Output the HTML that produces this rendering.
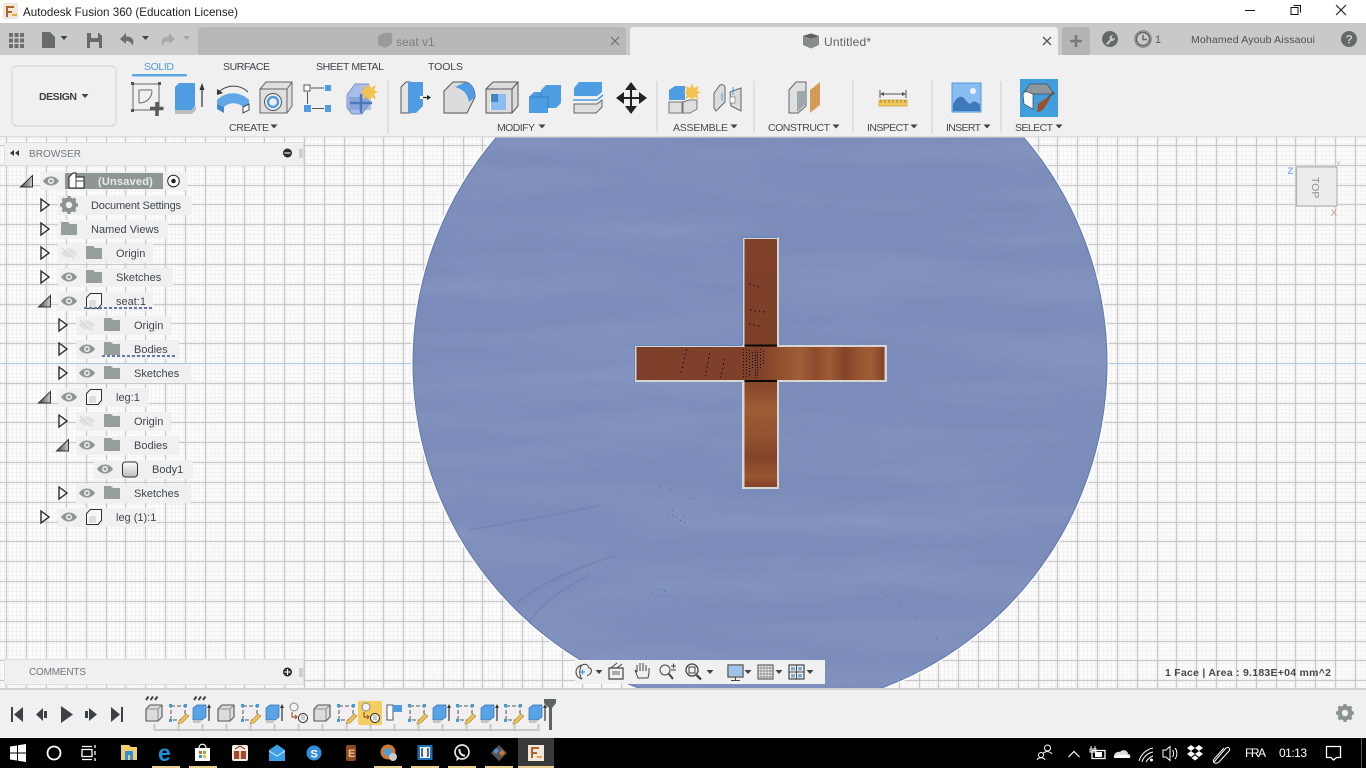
<!DOCTYPE html>
<html lang="en"><head><meta charset="utf-8"><title>Autodesk Fusion 360</title>
<style>
html,body{margin:0;padding:0;width:1366px;height:768px;overflow:hidden;background:#fff}
svg{display:block}
text{font-family:"Liberation Sans",sans-serif}
.t{font-size:11px;fill:#3f4650}
.l{font-size:10.5px;fill:#454b52}
.tab{font-size:10.5px;fill:#3c4248}
.w{fill:#fff;font-size:12px}
</style></head><body>
<svg xmlns="http://www.w3.org/2000/svg" width="1366" height="768" viewBox="0 0 1366 768">
<defs>
<pattern id="grid" patternUnits="userSpaceOnUse" x="0.5" y="0.5" width="3.966" height="3.966">
<rect width="3.966" height="3.966" fill="#fcfcfc"/>
<path d="M0 0V3.966M0 0H3.966" stroke="#ebebeb" stroke-width="1" fill="none"/>
</pattern>
<filter id="wood" x="0" y="0" width="100%" height="100%"><feTurbulence type="fractalNoise" baseFrequency="0.004 0.03" numOctaves="3" seed="5"/><feColorMatrix values="0 0 0 0 0.36  0 0 0 0 0.45  0 0 0 0 0.66  1.4 0 0 0 -0.5"/></filter>
<clipPath id="disc"><circle cx="760" cy="363" r="346.5"/></clipPath>
<clipPath id="can"><rect x="0" y="137" width="1366" height="551"/></clipPath>
<linearGradient id="brH" x1="0" x2="1" y1="0" y2="0">
<stop offset="0" stop-color="#7d3f29"/><stop offset=".5" stop-color="#7f412a"/><stop offset=".58" stop-color="#92502f"/><stop offset=".66" stop-color="#a15d36"/><stop offset=".72" stop-color="#8d4c2e"/><stop offset=".78" stop-color="#a05a35"/><stop offset=".84" stop-color="#82432a"/><stop offset=".9" stop-color="#9a5632"/><stop offset=".95" stop-color="#a05c36"/><stop offset="1" stop-color="#7f412a"/>
</linearGradient>
<linearGradient id="brV" x1="0" x2="0" y1="0" y2="1">
<stop offset="0" stop-color="#80412a"/><stop offset=".4" stop-color="#7e3f29"/><stop offset=".6" stop-color="#8a492c"/><stop offset=".68" stop-color="#a05c35"/><stop offset=".8" stop-color="#925130"/><stop offset=".88" stop-color="#83442b"/><stop offset=".96" stop-color="#99552f"/><stop offset="1" stop-color="#82432a"/>
</linearGradient>
<linearGradient id="triG" x1="0" x2="1" y1="0" y2="0"><stop offset="0" stop-color="#444"/><stop offset="1" stop-color="#ccc"/></linearGradient>
<linearGradient id="bodyG" x1="0" x2="0" y1="0" y2="1"><stop offset="0" stop-color="#fff"/><stop offset="1" stop-color="#bbb"/></linearGradient>

<g id="eye"><path d="M-8 0C-4 -6 4 -6 8 0C4 6 -4 6 -8 0Z" fill="#8f9793"/><circle r="3" fill="#f0f0f0"/><circle r="1.5" fill="#8f9793"/></g>
<g id="eyeoff"><path d="M-8 0C-4 -6 4 -6 8 0C4 6 -4 6 -8 0Z" fill="#dfe1e0"/><path d="M-6 -5L6 5" stroke="#f0f0f0" stroke-width="2"/><path d="M-7 -5L6 6" stroke="#d4d6d5" stroke-width="1"/></g>
<path id="folder" d="M0 0H7L9 2H16V13H0Z" fill="#969e9a"/>
<path id="tc" d="M0 -6L8 0L0 6Z" fill="#f5f5f5" stroke="#2c2c2c" stroke-width="1.400"/>
<path id="to" d="M-6.500 6H5.500V-5.500Z" fill="url(#triG)" stroke="#333" stroke-width="1"/>
<g id="comp"><path d="M-7.500 -3.500L-3.500 -7.500H7.500V3.500L4 7.500H-7.500Z" fill="#f7f7f7" stroke="#333" stroke-width="1" stroke-linejoin="round"/><rect x="-5" y="-1" width="7" height="7" fill="#dedede"/></g>
<g id="boxgray"><path d="M-8 -4L-4 -8H8V4L4 8H-8Z" fill="#dcdcdc" stroke="#555" stroke-width="1.100" stroke-linejoin="round"/><path d="M-8 -4H4V8M4 -4L8 -8" fill="none" stroke="#777" stroke-width=".8"/></g>
<g id="skpen"><path d="M-7 -7H7V7H-7Z" fill="none" stroke="#555" stroke-dasharray="4 2"/><rect x="-9" y="-9" width="3" height="3" fill="#3f9be5"/><rect x="6" y="-9" width="3" height="3" fill="#3f9be5"/><rect x="-9" y="6" width="3" height="3" fill="#3f9be5"/><path d="M1 8L8 1L11 3L4 10L0 11Z" fill="#eec25a" stroke="#a58437" stroke-width=".6"/></g>
<g id="boxblue"><path d="M-8 -5L-4 -8H5V4L1 7H-8Z" fill="#5aa3e6" stroke="#2f6ea8" stroke-width=".7"/><path d="M-8 7H1L-1 10H-8Z" fill="#c4c4c4"/><path d="M8 -6V8" stroke="#333" stroke-width="1.200"/><path d="M6 -5L8 -9L10 -5Z" fill="#333"/></g>
<g id="cap"><path d="M-3.500 -2H3.500L0 2Z" fill="#3f4448"/></g>
<g id="gear"><circle r="5.500" fill="none" stroke="#8b9490" stroke-width="4"/><path d="M0 -9V9M-9 0H9M-6.400 -6.400L6.400 6.400M6.400 -6.400L-6.400 6.400" stroke="#8b9490" stroke-width="3.200"/><circle r="3.200" fill="#f0f0f0"/></g>
<g id="linked"><circle cx="-4" cy="-6" r="4" fill="#f3f3f3" stroke="#888"/><path d="M-6 -1V4H-1M-3 2L-1 4L-3 6" fill="none" stroke="#a5562e" stroke-width="1.200"/><circle cx="5" cy="5" r="4.500" fill="#fff" stroke="#222"/><rect x="3" y="2" width="4" height="5" fill="#ccc"/></g>
</defs>

<!-- title bar -->
<rect width="1366" height="23" fill="#fff"/>
<rect x="3" y="3" width="15" height="16" fill="#f1e8dc"/><path d="M6 6H14V8H8V11H12V13H8V17H6Z" fill="#b2612c"/><rect x="12" y="14" width="5" height="2" fill="#eca341"/>
<text x="23" y="16" font-size="12" fill="#222" textLength="215" lengthAdjust="spacingAndGlyphs">Autodesk Fusion 360 (Education License)</text>
<path d="M1245 10.500H1255" stroke="#111" stroke-width="1"/>
<path d="M1293.500 5.500H1300.500V12.500M1291 7.500H1298V14.500H1291Z" fill="none" stroke="#111"/>
<path d="M1336 5L1346 15M1346 5L1336 15" stroke="#111" stroke-width="1"/>

<!-- tab bar -->
<rect y="23" width="1366" height="32" fill="#c9c9c9"/>
<g fill="#6b6f6f"><rect x="9" y="33" width="4" height="4"/><rect x="14.500" y="33" width="4" height="4"/><rect x="20" y="33" width="4" height="4"/><rect x="9" y="38.500" width="4" height="4"/><rect x="14.500" y="38.500" width="4" height="4"/><rect x="20" y="38.500" width="4" height="4"/><rect x="9" y="44" width="4" height="4"/><rect x="14.500" y="44" width="4" height="4"/><rect x="20" y="44" width="4" height="4"/></g>
<path d="M42 32H50L55 37V48H42Z" fill="#666b6b"/><use href="#cap" x="64" y="38"/>
<path d="M87 33H99L102 36V48H87ZM91 33V38H98V33ZM90 42V48H99V42Z" fill="#666b6b" fill-rule="evenodd"/>
<path d="M126 33L120 39L126 44V41C130 41 132 43 132 46C135 41 133 36.500 126 36.500Z" fill="#6b6f6f"/><use href="#cap" x="145.500" y="38"/>
<path d="M169 33L175 39L169 44V41C165 41 163 43 163 46C160 41 162 36.500 169 36.500Z" fill="#a6aaaa"/><path d="M183 36H190L186.500 40Z" fill="#a0a4a4"/>
<path d="M198 55V31Q198 27 202 27H622Q626 27 626 31V55Z" fill="#b8b8b8"/>
<path d="M378 36L384 33H392V44L385 48L378 45Z" fill="#989c98" stroke="#a9aca9" stroke-width=".5"/>
<text x="396" y="46" font-size="12" fill="#7a7d80">seat v1</text>
<path d="M611 37L619 45M619 37L611 45" stroke="#707070" stroke-width="1.200"/>
<path d="M630 55V31Q630 27 634 27H1054Q1058 27 1058 31V55Z" fill="#f0f0f0"/>
<path d="M803 36L811 33.500L819 36V45L811 48.500L803 45Z" fill="#888c88"/><path d="M803 36L811 38.500L819 36L811 33.500Z" fill="#5c605c"/>
<text x="824" y="46" font-size="12" fill="#5b6066" textLength="47">Untitled*</text>
<path d="M1043 37L1051 45M1051 37L1043 45" stroke="#555" stroke-width="1.300"/>
<path d="M1062 55V31Q1062 27 1066 27H1086Q1090 27 1090 31V55Z" fill="#b4b4b4"/>
<path d="M1076 35V47M1070 41H1082" stroke="#777c7a" stroke-width="2.600"/>
<circle cx="1110" cy="39" r="8" fill="#636868"/><path d="M1106 44L1110 39C1109 37 1110 35 1113 35L1111.500 37L1113 39L1115 37.500C1115 40 1113 41.500 1111 41L1108 45Z" fill="#c9c9c9"/>
<circle cx="1143" cy="39" r="7.500" fill="#636868"/><circle cx="1143" cy="39" r="5.800" fill="#c9c9c9"/><path d="M1143 35V39.500H1147" fill="none" stroke="#636868" stroke-width="1.500"/><circle cx="1143" cy="39" r="8.300" fill="none" stroke="#636868" stroke-width=".7"/>
<text x="1155" y="43" font-size="11" fill="#555a5a">1</text>
<text x="1191" y="43" font-size="10.500" fill="#4a4f5a" textLength="124">Mohamed Ayoub Aissaoui</text>
<circle cx="1349" cy="39" r="8" fill="#636868"/><text x="1345.500" y="43.500" font-size="12" font-weight="bold" fill="#c9c9c9">?</text>

<!-- canvas -->
<g clip-path="url(#can)">
<rect y="137" width="1366" height="551" fill="url(#grid)"/>
<path fill="none" stroke="#c9c9c9" stroke-width="1.300" d="M6.500 137V688M26.500 137V688M46.500 137V688M66.500 137V688M86.500 137V688M106.500 137V688M125.500 137V688M145.500 137V688M165.500 137V688M185.500 137V688M205.500 137V688M225.500 137V688M244.500 137V688M264.500 137V688M284.500 137V688M304.500 137V688M324.500 137V688M344.500 137V688M363.500 137V688M383.500 137V688M403.500 137V688M423.500 137V688M443.500 137V688M463.500 137V688M482.500 137V688M502.500 137V688M522.500 137V688M542.500 137V688M562.500 137V688M582.500 137V688M601.500 137V688M621.500 137V688M641.500 137V688M880.500 137V688M899.500 137V688M919.500 137V688M938.500 137V688M958.500 137V688M978.500 137V688M998.500 137V688M1018.500 137V688M1038.500 137V688M1057.500 137V688M1077.500 137V688M1097.500 137V688M1117.500 137V688M1137.500 137V688M1157.500 137V688M1176.500 137V688M1196.500 137V688M1216.500 137V688M1236.500 137V688M1256.500 137V688M1276.500 137V688M1295.500 137V688M1315.500 137V688M1335.500 137V688M1355.500 137V688"/>
<path fill="none" stroke="#c9c9c9" stroke-width="1.300" d="M0 145.500H1366M0 165.500H1366M0 185.500H1366M0 204.500H1366M0 224.500H1366M0 244.500H1366M0 264.500H1366M0 284.500H1366M0 304.500H1366M0 323.500H1366M0 343.500H1366M0 383.500H1366M0 403.500H1366M0 422.500H1366M0 442.500H1366M0 462.500H1366M0 482.500H1366M0 502.500H1366M0 522.500H1366M0 541.500H1366M0 561.500H1366M0 581.500H1366M0 601.500H1366M0 621.500H1366M0 641.500H1366M0 660.500H1366M0 680.500H1366"/>
<path d="M0 363.500H1366" stroke="#a9c5ea" stroke-width="1"/>
<circle cx="760" cy="363" r="349" fill="#fff"/>
<circle cx="760" cy="363" r="347" fill="#7c8cba" stroke="#5d7ab0" stroke-width="1"/>
<g clip-path="url(#disc)"><rect x="413" y="137" width="694" height="551" filter="url(#wood)" opacity=".35"/>
<path d="M517 603C545 580 585 565 617 555M470 530C520 520 560 515 600 505M520 640C530 610 560 590 590 575" fill="none" stroke="#6b7dae" stroke-width="2" opacity=".55"/>
<g fill="#4f6ba8"><rect x="652" y="592" width="1" height="1"/><rect x="656" y="590" width="1" height="1"/><rect x="660" y="589" width="1" height="1"/><rect x="664" y="591" width="1" height="1"/><rect x="658" y="594" width="1" height="1"/><rect x="662" y="596" width="1" height="1"/><rect x="666" y="595" width="1" height="1"/><rect x="668" y="514" width="1" height="1"/><rect x="672" y="515" width="1" height="1"/><rect x="676" y="517" width="1" height="1"/><rect x="680" y="520" width="1" height="1"/><rect x="684" y="522" width="1" height="1"/><rect x="672" y="510" width="1" height="1"/><rect x="683" y="515" width="1" height="1"/><rect x="690" y="498" width="1" height="1"/><rect x="694" y="497" width="1" height="1"/><rect x="660" y="486" width="1" height="1"/><rect x="670" y="488" width="1" height="1"/><rect x="886" y="596" width="1" height="1"/><rect x="900" y="606" width="1" height="1"/><rect x="915" y="618" width="1" height="1"/><rect x="930" y="632" width="1" height="1"/><rect x="936" y="638" width="1" height="1"/></g></g>
</g>
<!-- cross -->
<rect x="742" y="237" width="37" height="252" fill="#d6d6d2"/>
<rect x="634" y="345" width="253" height="37" fill="#d6d6d2"/>
<path d="M742.500 345V237.500H778M634.500 382V345.500H742" fill="none" stroke="#6488bd" stroke-width="1"/>
<rect x="744.500" y="239" width="32.500" height="248" fill="url(#brV)"/>
<rect x="636.500" y="347" width="248" height="33" fill="url(#brH)"/>
<rect x="744.500" y="344.500" width="32.500" height="2" fill="#0a0a0a"/>
<rect x="744.500" y="380" width="32.500" height="2" fill="#0a0a0a"/>
<g fill="none" stroke="#0a0a0a" stroke-width="1">
<path d="M743.500 349V378" stroke-dasharray="1 2"/><path d="M746.500 349V378" stroke-dasharray="1 2"/><path d="M749.500 350V375" stroke-dasharray="1 2"/><path d="M752.500 352V368" stroke-dasharray="1 2"/><path d="M755.500 350V378" stroke-dasharray="1 1.500"/><path d="M757.500 352V378" stroke-dasharray="1 1.500"/><path d="M760.500 349V368" stroke-dasharray="1 2"/><path d="M763.500 351V366" stroke-dasharray="1 2"/>
<path d="M686.500 349L680.500 375" stroke-dasharray="1.500 3"/><path d="M709.500 353L705.500 376" stroke-dasharray="1.500 3"/><path d="M724.500 359L720.500 378" stroke-dasharray="1.500 3"/>
<path d="M749 284L760 287M750 310L765 312M749 324L760 326" stroke-dasharray="1.500 3"/>
</g>

<!-- view cube -->
<path d="M1296.500 167H1337V206H1296.500Z" fill="#ececec" stroke="#b5b5b5" stroke-width="1.200"/>
<text transform="translate(1312,177) rotate(90)" font-size="10.500" fill="#8f8f8f">TOP</text>
<text x="1287.500" y="174" font-size="9.500" font-weight="bold" fill="#7fb0ee">Z</text>
<text x="1336" y="166" font-size="7" fill="#aeb2ae">Y</text>
<text x="1330.500" y="216" font-size="10" fill="#cf9f88">X</text>

<!-- toolbar -->
<rect y="55" width="1366" height="82" fill="#f0f0f0"/>
<rect y="136" width="1366" height="1.500" fill="#dcdcdc"/>
<rect x="12" y="66" width="104" height="60" rx="5" fill="#f0f0f0" stroke="#dcdcdc" stroke-width="1.500"/>
<text x="39" y="100" font-size="10.500" font-weight="bold" fill="#3c4248" textLength="38">DESIGN</text><use href="#cap" x="85" y="96"/>
<text class="tab" x="144" y="70" style="fill:#4f9bd8" textLength="30">SOLID</text>
<rect x="132" y="74" width="55" height="2.500" rx="1" fill="#5aa9e6"/>
<text class="tab" x="223" y="70" textLength="47">SURFACE</text>
<text class="tab" x="316" y="70" textLength="68">SHEET METAL</text>
<text class="tab" x="428" y="70" textLength="35">TOOLS</text>
<g fill="#dfdfdf"><rect x="387" y="81" width="2" height="52"/><rect x="656" y="81" width="2" height="52"/><rect x="753" y="81" width="2" height="52"/><rect x="852" y="81" width="2" height="52"/><rect x="931" y="81" width="2" height="52"/><rect x="1000" y="81" width="2" height="52"/></g>

<!-- create icons -->
<path d="M133 84H159V110H133Z" fill="none" stroke="#666" stroke-width="1"/>
<g fill="#555"><rect x="131" y="82" width="3" height="3"/><rect x="158" y="82" width="3" height="3"/><rect x="131" y="109" width="3" height="3"/></g>
<path d="M139 90H152M139 90V103M152 91C152 97 147 103 139 103" fill="none" stroke="#666"/>
<path d="M157 102V116M150 108.500H163.500" stroke="#5a5a5a" stroke-width="3.500"/>
<path d="M175 87L179 83H195V106L192 110H175Z" fill="#4e9ce2"/><path d="M175 110H192L196 106V110L192 114H175Z" fill="#bdbdbd"/>
<path d="M202 87V107" stroke="#333" stroke-width="1.200"/><path d="M199.500 90L202 83L204.500 90Z" fill="#333"/>
<path d="M218 93C226 84 240 84 248 92" fill="none" stroke="#444"/><path d="M217 89V95L223 93Z" fill="#333"/>
<path d="M217 100C226 91 240 91 249 100V104L243 107C238 102 229 102 224 107L217 104Z" fill="#61a6e7"/><path d="M217 104L224 107V113L217 109Z" fill="#3f88cc"/><path d="M243 107L249 104V110L243 113Z" fill="#fff" stroke="#444"/>
<path d="M260 89L266 82H292V106L287 113H260Z" fill="#dfdfdf" stroke="#666"/><path d="M260 89H287V113M287 89L292 82" fill="none" stroke="#666"/>
<circle cx="273" cy="102" r="8.500" fill="#efefef" stroke="#555"/><circle cx="273" cy="102" r="5" fill="none" stroke="#4e9ce2" stroke-width="2.400"/>
<rect x="304" y="85" width="6" height="6" fill="#fff" stroke="#555"/><rect x="325" y="85" width="6" height="6" fill="#4e9ce2"/><rect x="304" y="105" width="7" height="7" fill="#4e9ce2"/><rect x="325" y="105" width="6" height="7" fill="#4e9ce2"/>
<path d="M311 88H324M307.500 92V104M312 108.500H324" stroke="#555" fill="none"/>
<path d="M347 95L355 84H369V104L362 114H352L347 108Z" fill="#a7bde8" stroke="#7e94c5"/><rect x="349" y="97" width="22" height="13" fill="#6f8fcb" opacity=".5"/><path d="M350 103H372M361 94V113" stroke="#4d79bb" stroke-width="2.500"/>
<path d="M369 83L371 88L376 85L374 90L378 92L374 94L376 99L371 97L369 101L367 97L362 99L364 94L360 92L364 90L362 85L367 88Z" fill="#f4c453"/>
<text class="l" x="229" y="131" textLength="40">CREATE</text><use href="#cap" x="274" y="126.500"/>

<!-- modify icons -->
<path d="M401 87L406 82H410V113H401Z" fill="#e3e3e3" stroke="#555"/><path d="M408 82H423V106L416 113H408Z" fill="#4e9ce2"/><path d="M420 97.500H429" stroke="#222" stroke-width="1.200"/><path d="M427 95L431 97.500L427 100Z" fill="#222"/><rect x="420" y="96" width="3" height="3" fill="#fff"/>
<path d="M444 91L453 82H466C472 84 475 90 475 97L467 113H444Z" fill="#dcdcdc" stroke="#555"/><path d="M455 87L466 82C472 84 475 90 475 97L469 102C468 94 463 89 455 87Z" fill="#4e9ce2"/>
<path d="M486 89L493 82H518V106L512 113H486Z" fill="#dcdcdc" stroke="#555"/><path d="M486 89H512V113M512 89L518 82" fill="none" stroke="#555"/><rect x="490" y="94" width="16" height="16" fill="#fff"/><rect x="491" y="94" width="7" height="8" fill="#3e86c9"/><path d="M491 102H498V94H506V110H491Z" fill="#8cbdf0"/>
<path d="M541 90L546 85H561V103L556 108H548V113H529V97L534 92H541Z" fill="#4e9ce2"/><path d="M541 92V97M529 97H548V108" stroke="#2f78bb" stroke-width=".7" fill="none"/>
<path d="M574 88L579 82H602V92L597 96H574Z" fill="#4e9ce2"/><path d="M573 100H597L603 95" stroke="#4e9ce2" stroke-width="1.500" fill="none"/>
<path d="M574 104H597L602 100V107L596 113H574Z" fill="#dfdfdf" stroke="#666"/>
<path d="M631 87V109M620 98H642" stroke="#222" stroke-width="2"/><path d="M631 82L637 90H625ZM631 114L625 106H637ZM616 98L624 92V104ZM647 98L639 104V92Z" fill="#222"/>
<text class="l" x="497" y="131" textLength="38">MODIFY</text><use href="#cap" x="542" y="126.500"/>

<!-- assemble -->
<path d="M669 90L675 86H685V100H669Z" fill="#4e9ce2"/><path d="M669 102H682V113H669ZM683 102L689 100L697 100V109L690 113H683Z" fill="#dfdfdf" stroke="#777"/>
<path d="M692 83L694 88L699 86L697 91L701 92.500L697 94L699 99L694 97L692 101L690 97L685 99L687 94L683 92.500L687 91L685 86L690 88Z" fill="#f4c453"/>
<path d="M714 93L720 85C723 84 725 85 725 88V102L716 111L714 108Z" fill="#dcdcdc" stroke="#666"/><path d="M730 92L741 88V111L731 106Z" fill="#dcdcdc" stroke="#666"/><rect x="730" y="97" width="5" height="6" fill="#fff" stroke="#666" stroke-width=".6"/><path d="M722 93V101M733 87V95" stroke="#4e9ce2"/>
<text class="l" x="673" y="131" textLength="55">ASSEMBLE</text><use href="#cap" x="734" y="126.500"/>

<!-- construct -->
<path d="M789 90L796 82H806V106L798 113H789Z" fill="#dfdfdf" stroke="#666"/><path d="M797 91H805V105L797 112Z" fill="#9ea9ad"/>
<path d="M810 90L820 82V105L810 113Z" fill="#d6a05c"/><path d="M812 90V110M815 88V108M818 86V106" stroke="#c4763a" stroke-dasharray="1 1.500"/>
<text class="l" x="768" y="131" textLength="62">CONSTRUCT</text><use href="#cap" x="836" y="126.500"/>

<!-- inspect -->
<rect x="879" y="100" width="28" height="6" fill="#f3c95f" stroke="#c89a35" stroke-width=".7"/><path d="M881 100V103M885 100V103M889 100V103M893 100V103M897 100V103M901 100V103M905 100V103" stroke="#8a6c20" stroke-width=".8"/>
<path d="M880 90V98M906 90V98M882 94H904" stroke="#555"/><path d="M884 92L880 94L884 96ZM902 92L906 94L902 96Z" fill="#555"/>
<text class="l" x="867" y="131" textLength="42">INSPECT</text><use href="#cap" x="914" y="126.500"/>

<!-- insert -->
<rect x="952" y="83" width="29" height="29" fill="#8abdf2" stroke="#4f9ddd"/>
<circle cx="973" cy="91" r="3" fill="#f2f2f2"/>
<path d="M953 111V104C957 97 961 95 964 98C966 101 968 103 970 104C973 100 977 101 980 105V111Z" fill="#3d79bb"/>
<text class="l" x="946" y="131" textLength="35">INSERT</text><use href="#cap" x="987" y="126.500"/>

<!-- select -->
<rect x="1020" y="79" width="38" height="38" fill="#3f9edb"/>
<path d="M1023 94L1030 84H1047L1054 94H1033Z" fill="#8e989c" stroke="#4a4f52" stroke-width=".7"/>
<path d="M1023 94C1024 91 1026 91 1033 94V109L1024 104Z" fill="#fafafa" stroke="#444" stroke-width=".7"/>
<path d="M1038 104L1048 97L1050 99L1044 108C1042 112 1036 112 1037 112Z" fill="#9c5028"/><path d="M1048 98L1054 92" stroke="#555" stroke-width="2"/>
<text class="l" x="1015" y="131" textLength="38">SELECT</text><use href="#cap" x="1059" y="126.500"/>

<!-- browser panel -->
<rect x="4.500" y="142.500" width="299" height="23" fill="#f0f0f0" stroke="#dedede"/>
<path d="M10 153L14 150V156ZM15 153L19 150V156Z" fill="#333"/>
<text x="29" y="157" font-size="10" fill="#6f7780" textLength="52">BROWSER</text>
<circle cx="287.500" cy="153" r="4.500" fill="#2c2c2c"/><path d="M284.500 153H290.500" stroke="#f0f0f0" stroke-width="1.200"/>
<path d="M300 149V158M302 149V158" stroke="#999" stroke-width=".8"/>

<g fill="#f0f0f0">
<rect x="40" y="172" width="148" height="18"/>
<rect x="58" y="196" width="134" height="19"/>
<rect x="58" y="220" width="110" height="19"/>
<rect x="58" y="244" width="95" height="19"/>
<rect x="58" y="268" width="115" height="19"/>
<rect x="58" y="292" width="95" height="19"/>
<rect x="76" y="316" width="95" height="19"/>
<rect x="76" y="340" width="103" height="19"/>
<rect x="76" y="364" width="115" height="19"/>
<rect x="58" y="388" width="91" height="19"/>
<rect x="76" y="412" width="95" height="19"/>
<rect x="76" y="436" width="103" height="19"/>
<rect x="94" y="460" width="99" height="19"/>
<rect x="76" y="484" width="115" height="19"/>
<rect x="58" y="508" width="98" height="19"/>
</g>
<!-- row 1 -->
<use href="#to" x="27" y="181"/>
<use href="#eye" x="51" y="181"/>
<rect x="65" y="173" width="98" height="16" fill="#8f9793"/>
<path d="M69 177L73 173H76V177H84V188H69Z" fill="#fff" stroke="#222"/><path d="M76 177V188M76 181H84" stroke="#444" fill="none"/>
<text x="98" y="185" font-size="11" font-weight="bold" fill="#e9eaea" letter-spacing=".2">(Unsaved)</text>
<circle cx="173.500" cy="181" r="5.800" fill="#fff" stroke="#222"/><circle cx="173.500" cy="181" r="2.300" fill="#222"/>
<!-- rows -->
<use href="#tc" x="41" y="205"/><use href="#gear" x="69" y="205"/>
<text class="t" x="91" y="209" textLength="90">Document Settings</text>
<use href="#tc" x="41" y="229"/><use href="#folder" x="61" y="222"/>
<text class="t" x="91" y="233" textLength="68">Named Views</text>
<use href="#tc" x="41" y="253"/><use href="#eyeoff" x="69" y="253"/><use href="#folder" x="86" y="246"/>
<text class="t" x="116" y="257">Origin</text>
<use href="#tc" x="41" y="277"/><use href="#eye" x="69" y="277"/><use href="#folder" x="86" y="270"/>
<text class="t" x="116" y="281">Sketches</text>
<use href="#to" x="45" y="301"/><use href="#eye" x="69" y="301"/><use href="#comp" x="94" y="301"/>
<text class="t" x="116" y="305">seat:1</text>
<path d="M84 308H152" stroke="#6377ad" stroke-width="2" stroke-dasharray="3 2"/>
<use href="#tc" x="59" y="325"/><use href="#eyeoff" x="87" y="325"/><use href="#folder" x="104" y="318"/>
<text class="t" x="134" y="329">Origin</text>
<use href="#tc" x="59" y="349"/><use href="#eye" x="87" y="349"/><use href="#folder" x="104" y="342"/>
<text class="t" x="134" y="353">Bodies</text>
<path d="M102 356H176" stroke="#6377ad" stroke-width="2" stroke-dasharray="3 2"/>
<use href="#tc" x="59" y="373"/><use href="#eye" x="87" y="373"/><use href="#folder" x="104" y="366"/>
<text class="t" x="134" y="377">Sketches</text>
<use href="#to" x="45" y="397"/><use href="#eye" x="69" y="397"/><use href="#comp" x="94" y="397"/>
<text class="t" x="116" y="401">leg:1</text>
<use href="#tc" x="59" y="421"/><use href="#eyeoff" x="87" y="421"/><use href="#folder" x="104" y="414"/>
<text class="t" x="134" y="425">Origin</text>
<use href="#to" x="63" y="445"/><use href="#eye" x="87" y="445"/><use href="#folder" x="104" y="438"/>
<text class="t" x="134" y="449">Bodies</text>
<use href="#eye" x="105" y="469"/><rect x="122.500" y="462" width="15" height="15" rx="3" fill="url(#bodyG)" stroke="#333"/>
<text class="t" x="152" y="473">Body1</text>
<use href="#tc" x="59" y="493"/><use href="#eye" x="87" y="493"/><use href="#folder" x="104" y="486"/>
<text class="t" x="134" y="497">Sketches</text>
<use href="#tc" x="41" y="517"/><use href="#eye" x="69" y="517"/><use href="#comp" x="94" y="517"/>
<text class="t" x="116" y="521">leg (1):1</text>

<!-- comments -->
<rect x="4.500" y="659.500" width="299" height="25" fill="#f0f0f0" stroke="#dedede"/>
<text x="29" y="675" font-size="10" fill="#6f7780" textLength="57">COMMENTS</text>
<circle cx="287.500" cy="672" r="4.500" fill="#2c2c2c"/><path d="M284.500 672H290.500M287.500 669V675" stroke="#f0f0f0" stroke-width="1.200"/>
<path d="M300 668V677M302 668V677" stroke="#999" stroke-width=".8"/>

<!-- nav bar -->
<rect x="575" y="660" width="250" height="24" fill="#f0f0f0"/>
<g fill="none" stroke="#444" stroke-width="1">
<path d="M582 665C578 666 576 669 576 672C576 675 578 678 582 679M582 665C586 663 588 665 589 668C592 668 592 672 590 674L587 676M582 679C579 676 579 668 582 665"/>
<path d="M609 668H623V679H609Z" stroke-width="1.200"/><path d="M611 668L617 663M617 668L622 664"/>
<path d="M637 672V665M640 671V663M643 671V663M646 671V665M649 673V668M637 672L635 670L638 678H648L649 673"/>
<circle cx="665" cy="670" r="5"/><path d="M669 674L673 679" stroke-width="2"/><path d="M671 666H676M673.500 663.500V668.500M671 670H676"/>
<circle cx="692" cy="670" r="6" stroke-width="1.300"/><rect x="689" y="667" width="6" height="6"/><path d="M696.500 675L701 679.500" stroke-width="2.300"/>
<rect x="728" y="665" width="15" height="12" stroke-width="1.200"/><path d="M735.500 677V680M731 680.500H740"/>
<rect x="758" y="665" width="15" height="14"/><path d="M761 665V679M764 665V679M767 665V679M770 665V679M758 668H773M758 671H773M758 674H773M758 677H773" stroke="#777" stroke-width=".7"/>
<rect x="789" y="665" width="15" height="14" stroke-width="1.200"/><path d="M796.500 665V679M789 672H804"/>
</g>
<rect x="612" y="671" width="8" height="4" fill="#aaa"/>
<rect x="729" y="666" width="13" height="10" fill="#9dc2ec"/>
<g fill="#7fa9d8"><rect x="791" y="667" width="4" height="3.500"/><rect x="798" y="667" width="4" height="3.500"/><rect x="791" y="674" width="4" height="3.500"/><rect x="798" y="674" width="4" height="3.500"/></g>
<path d="M580 672H585M582.500 669.500V674.500" stroke="#3f9edb" stroke-width="1.200"/>
<use href="#cap" x="599" y="672"/><use href="#cap" x="710" y="672"/><use href="#cap" x="748" y="672"/><use href="#cap" x="779" y="672"/><use href="#cap" x="810" y="672"/>

<text x="1165" y="676" font-size="10.500" font-weight="bold" fill="#464a4d" textLength="166">1 Face | Area : 9.183E+04 mm^2</text>

<!-- timeline -->
<rect y="688" width="1366" height="50" fill="#f0f0f0"/>
<rect y="688" width="1366" height="2" fill="#d0d0d0"/>
<g fill="#3c4146">
<rect x="11" y="707" width="2" height="15"/><path d="M23 707V722L14 714.500Z"/>
<path d="M36 714.500L43 708V721ZM44 711H47V718H44Z"/>
<path d="M61 706V723L73 714.500Z"/>
<path d="M85 711H88V718H85ZM89 708V721L97 714.500Z"/>
<path d="M111 707V722L120 714.500Z"/><rect x="121" y="707" width="2" height="15"/>
</g>
<path d="M146 700L148.500 696.500M150.500 700L153 696.500M155 700L157.500 696.500M194 700L196.500 696.500M198.500 700L201 696.500M203 700L205.500 696.500" stroke="#444" stroke-width="2"/>
<rect x="358" y="701" width="24" height="24" rx="2" fill="#f5cd60"/>
<use href="#boxgray" x="154" y="713"/><use href="#skpen" x="178" y="713"/><use href="#boxblue" x="201" y="713"/><use href="#boxgray" x="226" y="713"/>
<use href="#skpen" x="250" y="713"/><use href="#boxblue" x="274" y="713"/><use href="#linked" x="298" y="713"/><use href="#boxgray" x="322" y="713"/>
<use href="#skpen" x="346" y="713"/><use href="#linked" x="370" y="713"/>
<rect x="387" y="705" width="6" height="15" fill="#fff" stroke="#555"/><rect x="393" y="705" width="9" height="7" fill="#4e9ce2"/>
<use href="#skpen" x="417" y="713"/><use href="#boxblue" x="441" y="713"/><use href="#skpen" x="465" y="713"/><use href="#boxblue" x="489" y="713"/><use href="#skpen" x="513" y="713"/><use href="#boxblue" x="537" y="713"/>
<path d="M154.500 724V730H538.500V724M178.500 724V730M202.500 724V730M226.500 724V730M250.500 724V730M274.500 724V730M298.500 724V730M322.500 724V730M346.500 724V730M370.500 724V730M394.500 724V730M418.500 724V730M442.500 724V730M466.500 724V730M490.500 724V730M514.500 724V730" fill="none" stroke="#c8c8c8" stroke-width="2"/>
<path d="M544 699H556V703L552 708V730H549V708L544 703Z" fill="#5e6462"/>
<use href="#gear" x="1345" y="713"/>

<!-- taskbar -->
<rect y="738" width="1366" height="30" fill="#000"/>
<rect x="518" y="738" width="36" height="30" fill="#3a3a3a"/>
<g fill="#fff"><path d="M10 746.500L17 745.500V752.500H10ZM18 745.300L26 744V752.500H18ZM10 753.500H17V760.500L10 759.500ZM18 753.500H26V762L18 760.700Z"/></g>
<circle cx="54" cy="753" r="6.500" fill="none" stroke="#fff" stroke-width="1.800"/>
<path d="M82 746.500H92M82 759.500H92M82 749.500H92V756.500H82ZM95 745V748M95 751V755M95 758V761" fill="none" stroke="#fff" stroke-width="1.300"/>
<path d="M121 745H129L131 747H137V760H121Z" fill="#f3cd6a"/><rect x="125" y="751" width="8" height="9" fill="#2f8fe0"/><rect x="128" y="755" width="2" height="5" fill="#f3cd6a"/>
<text x="158" y="761" font-size="23" font-weight="bold" fill="#1b8fdc">e</text>
<rect x="195" y="748" width="15" height="13" fill="#fff"/><path d="M199 748C199 743 206 743 206 748" fill="none" stroke="#fff" stroke-width="1.300"/><rect x="199" y="751" width="3" height="3" fill="#e8593a"/><rect x="203" y="751" width="3" height="3" fill="#7cb342"/><rect x="199" y="755" width="3" height="3" fill="#2f8fe0"/><rect x="203" y="755" width="3" height="3" fill="#f3bb3a"/>
<rect x="232" y="745" width="16" height="16" rx="2" fill="#f3ebe4"/><rect x="234" y="751" width="12" height="8" fill="#9c4a2a"/><path d="M240 746V760" stroke="#f3ebe4" stroke-width="1.500"/><path d="M235 749L240 746L245 749" fill="none" stroke="#9c4a2a" stroke-width="1.300"/>
<path d="M269 750L277 744.500L285 750V761H269Z" fill="#3d9fe3"/><path d="M269 751L277 756L285 751" fill="none" stroke="#dcedf9"/>
<circle cx="314" cy="753" r="7.500" fill="#2f8fdc"/><text x="310.500" y="757.500" font-size="11" font-weight="bold" fill="#fff">S</text>
<rect x="346" y="745" width="10" height="16" rx="2" fill="#8a4a25"/><text x="348" y="757" font-size="11" font-weight="bold" fill="#f0c080">E</text>
<circle cx="388" cy="752" r="7.500" fill="#d0792f"/><circle cx="388" cy="752" r="4" fill="#4a9edb"/><circle cx="393" cy="757" r="4" fill="#c9c9c9"/>
<rect x="417.500" y="745" width="15" height="15" fill="#1f6fb8"/><rect x="420" y="747" width="10" height="11" fill="#fff" opacity=".9"/><path d="M423 749H422V756H423M427 749H428V756H427" fill="none" stroke="#222" stroke-width="1.300"/>
<circle cx="462" cy="752" r="7" fill="none" stroke="#e6e6e6" stroke-width="1.700"/><path d="M456 761L457.500 756L460 758.500Z" fill="#e6e6e6"/><path d="M459.500 749C459 753 462 756 465 755.500" fill="none" stroke="#e6e6e6" stroke-width="2"/>
<path d="M499 745L507 753L499 761L491 753Z" fill="#555"/><path d="M496 748L499 751L496 754L493 751Z" fill="#4b8fe0"/><path d="M502 750L505 753L502 756L499 753Z" fill="#d0792f"/>
<rect x="528" y="745" width="16" height="16" fill="#f1e8dc"/><path d="M531 747H539V749H533V752H537V754H533V758H531Z" fill="#b2612c"/><rect x="537" y="756" width="5" height="2" fill="#eca341"/>
<g fill="#e8cf8e"><rect x="152" y="766" width="28" height="2"/><rect x="189" y="766" width="28" height="2"/><rect x="374" y="766" width="28" height="2"/><rect x="411" y="766" width="28" height="2"/><rect x="448" y="766" width="28" height="2"/><rect x="485" y="766" width="28" height="2"/><rect x="518" y="766" width="36" height="2"/></g>

<!-- tray -->
<g fill="none" stroke="#fff" stroke-width="1">
<circle cx="1047.500" cy="748" r="3"/><path d="M1043 753.500C1045 751 1050 751 1052 754"/><circle cx="1041" cy="755" r="2.500"/><path d="M1037 760C1038 757 1044 757 1045 760"/>
<path d="M1068.500 757L1074 751.500L1079.500 757" stroke-width="1.200"/>
<rect x="1092" y="750.500" width="13" height="8" stroke-width="1.300"/><path d="M1091 746V749M1095 746V749M1090 749H1096V752H1090Z"/>
<path d="M1139 761C1141 754 1147 749 1153 748M1142 762C1143 757 1148 753 1153 752M1146 762C1147 760 1150 757 1153 756"/>
<path d="M1163 750H1166L1170 746.500V760.500L1166 757H1163ZM1172.500 750C1174 752 1174 755 1172.500 757M1175 748C1177.500 751 1177.500 756 1175 759"/>
<path d="M1214 762L1226 748C1228 746 1231 749 1229 751L1219 762C1215 765 1212 762 1214 759L1224 748"/>
<path d="M1326.500 746.500H1340.500V757.500H1336.500L1333.500 760L1331 757.500H1326.500Z" stroke-width="1.300"/>
</g>
<rect x="1095" y="752" width="7" height="5" fill="#fff"/>
<circle cx="1151.500" cy="760" r="1.500" fill="#fff"/>
<path d="M1114 758C1113 753 1118 751 1120 752C1122 749 1128 750 1128 754C1131 754 1131 758 1129 758Z" fill="#dcdcdc"/><path d="M1114 758C1115 755 1120 754 1122 755C1125 754 1129 755 1130 758Z" fill="#fff"/>
<path d="M1191 746L1195 749L1191 752L1187 749ZM1199 746L1203 749L1199 752L1195 749ZM1191 752L1195 755L1191 758L1187 755ZM1199 752L1203 755L1199 758L1195 755ZM1191.500 759L1195 756.500L1198.500 759L1195 761.500Z" fill="#fff" transform="translate(0,-1)"/>
<text class="w" x="1245" y="757" font-size="11.500" textLength="21">FRA</text>
<text class="w" x="1279" y="757" font-size="11.500" textLength="28">01:13</text>
<rect x="1361" y="738" width="1" height="30" fill="#555"/>
</svg>
</body></html>
